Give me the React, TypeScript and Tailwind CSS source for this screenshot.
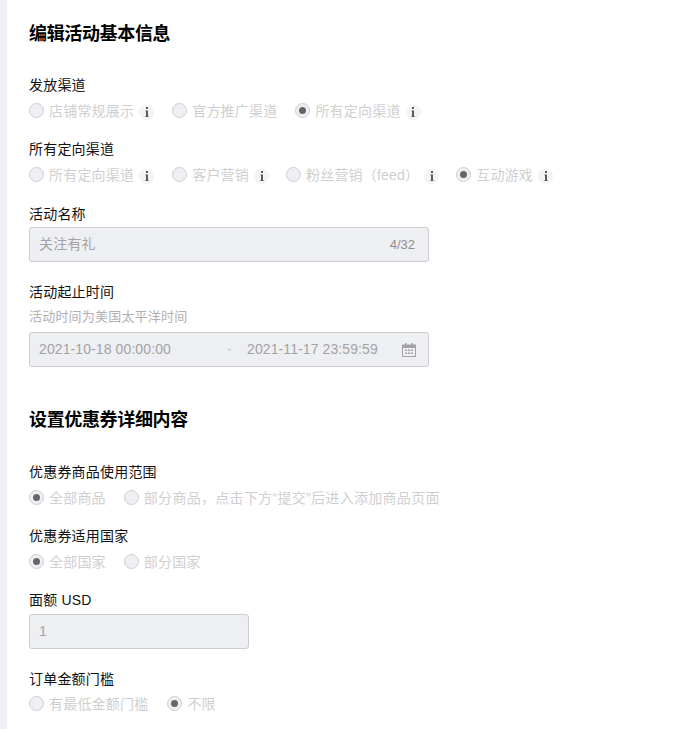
import React from 'react';

const cjk = "font-['Liberation_Sans','Noto_Sans_CJK_SC',sans-serif]";

const InfoIcon = () => (
  <span className="ml-[5px] flex h-[15px] w-[15px] translate-y-[1px] items-center justify-center rounded-full bg-[#f3f3f5]">
    <svg width="4" height="10" viewBox="0 0 4 10" fill="#5a5a5a">
      <rect x="1" y="0" width="2" height="2" />
      <path d="M0.500 3.500H3V9H3.500V10H0.500V9H1V4.500H0.500z" />
    </svg>
  </span>
);

const Radio: React.FC<{ label: string; checked?: boolean; info?: boolean; className?: string }> = ({
  label,
  checked,
  info,
  className
}) => (
  <div className={`flex items-center ${className ?? ''}`}>
    <span className="flex h-[15px] w-[15px] -translate-y-[1px] items-center justify-center rounded-full border border-[#cfd0d5] bg-[#eeeff3]">
      {checked && <span className="h-[7px] w-[7px] rounded-full bg-[#666666]" />}
    </span>
    <span className="ml-[5px] text-[14px] leading-5 whitespace-nowrap text-[#cfcfcf]">{label}</span>
    {info && <InfoIcon />}
  </div>
);

const Label: React.FC<{ children: React.ReactNode }> = ({ children }) => (
  <div className="text-[14px] leading-5 text-[#111111]">{children}</div>
);

const Field: React.FC<{ className: string; title: string; children: React.ReactNode }> = ({
  className,
  title,
  children
}) => (
  <div className={className}>
    <Label>{title}</Label>
    {children}
  </div>
);

export default function App() {
  return (
    <div className={`h-[729px] overflow-hidden border-l-[7px] border-[#eeeff4] bg-white pl-[22px] tracking-[0.2px] ${cjk}`}>
      <h2 className="pt-[21px] text-[18px] leading-[26px] font-bold tracking-[-0.35px] text-black">编辑活动基本信息</h2>

      <Field className="mt-[28px]" title="发放渠道">
        <div className="mt-[6px] flex h-5 items-center">
          <Radio label="店铺常规展示" info />
          <Radio label="官方推广渠道" className="ml-[18px]" />
          <Radio label="所有定向渠道" checked info className="ml-[18px]" />
        </div>
      </Field>

      <Field className="mt-[18px]" title="所有定向渠道">
        <div className="mt-[6px] flex h-5 items-center">
          <Radio label="所有定向渠道" info />
          <Radio label="客户营销" info className="ml-[18px]" />
          <Radio label="粉丝营销（feed）" info className="ml-[17px]" />
          <Radio label="互动游戏" checked info className="ml-[17px]" />
        </div>
      </Field>

      <Field className="mt-[19px]" title="活动名称">
        <div className="mt-[3px] flex h-[35px] w-[400px] items-center justify-between rounded-[3px] border border-[#cdcdd0] bg-[#eeeff3] pl-[9px] pr-[13px] text-[14px] text-[#a3a3a3]">
          <span>关注有礼</span>
          <span className="text-[13px] tracking-normal text-[#8f8f8f]">4/32</span>
        </div>
      </Field>

      <Field className="mt-[20px]" title="活动起止时间">
        <div className="mt-[5px] text-[13px] leading-5 text-[#b0b0b4]">活动时间为美国太平洋时间</div>
        <div className="mt-[5px] flex h-[35px] w-[400px] items-center rounded-[3px] border border-[#cdcdd0] bg-[#eeeff3] pl-[9px] text-[14px] tracking-[0.1px] text-[#a3a3a3]">
          <span className="w-[188px]">2021-10-18 00:00:00</span>
          <span className="w-[20px] text-[#c8c8c8]">-</span>
          <span>2021-11-17 23:59:59</span>
          <svg className="ml-[24px]" width="14" height="14" viewBox="0 0 14 14" fill="#a3a3a3">
            <path d="M3 0h1.500v1.500h5V0H11v1.500h3V14H0V1.500h3zM1 5v8h12V5z" />
            <path d="M3 6.500h2v1.500H3zM6 6.500h2v1.500H6zM9 6.500h2v1.500H9zM3 9.500h2V11H3zM6 9.500h2V11H6zM9 9.500h2V11H9z" />
          </svg>
        </div>
      </Field>

      <h2 className="mt-[40px] text-[18px] leading-[26px] font-bold tracking-[-0.35px] text-black">设置优惠券详细内容</h2>

      <Field className="mt-[29px]" title="优惠券商品使用范围">
        <div className="mt-[6px] flex h-5 items-center">
          <Radio label="全部商品" checked />
          <Radio label="部分商品，点击下方“提交”后进入添加商品页面" className="ml-[18px] tracking-[0.3px]" />
        </div>
      </Field>

      <Field className="mt-[18px]" title="优惠券适用国家">
        <div className="mt-[6px] flex h-5 items-center">
          <Radio label="全部国家" checked />
          <Radio label="部分国家" className="ml-[18px]" />
        </div>
      </Field>

      <Field className="mt-[18px]" title="面额 USD">
        <div className="mt-[4px] flex h-[35px] w-[220px] items-center rounded-[3px] border border-[#cdcdd0] bg-[#eeeff3] px-[9px] text-[14px] text-[#a3a3a3]">
          1
        </div>
      </Field>

      <Field className="mt-[20px]" title="订单金额门槛">
        <div className="mt-[5px] flex h-5 items-center">
          <Radio label="有最低金额门槛" />
          <Radio label="不限" checked className="ml-[19px]" />
        </div>
      </Field>
    </div>
  );
}
